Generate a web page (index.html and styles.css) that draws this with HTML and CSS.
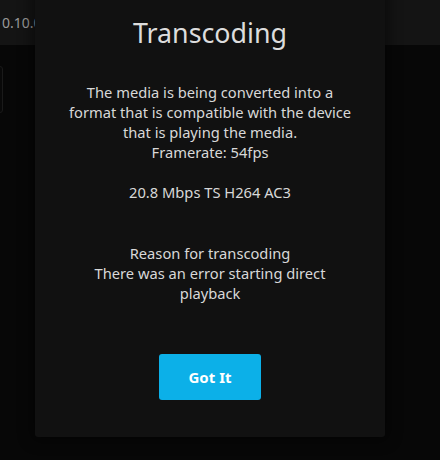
FILE: index.html
```html
<!DOCTYPE html>
<html>
<head>
<meta charset="utf-8">
<link rel="stylesheet" href="styles.css">
</head>
<body>
<header class="topbar">
  <span class="server">10.10.0.12</span>
</header>
<main class="page">
  <div class="card-edge"></div>
</main>
<div class="dialog">
  <h1 class="title">Transcoding</h1>
  <div class="body">
    <p>The media is being converted into a format that is compatible with the device that is playing the media.<br>Framerate: 54fps</p>
    <p class="stats">20.8 Mbps TS H264 AC3</p>
    <p class="reason">Reason for transcoding<br>There was an error starting direct playback</p>
  </div>
  <div class="actions">
    <button class="btn">Got It</button>
  </div>
</div>
</body>
</html>
```

FILE: styles.css
```css
html, body {
  margin: 0;
  padding: 0;
  background: #070707;
  height: 100%;
  overflow: hidden;
  font-family: "Noto Sans", "Open Sans", sans-serif;
}
.topbar {
  height: 45px;
  background: #141414;
  display: flex;
  align-items: center;
  overflow: hidden;
}
.server {
  color: #9a9a9a;
  font-size: 14px;
  margin-left: -6px;
  white-space: nowrap;
}
.page {
  padding-top: 21px;
}
.card-edge {
  width: 20px;
  height: 45px;
  margin-left: -19px;
  border: 1px solid #1a1a1a;
  border-radius: 3px;
  background: #090909;
}
.dialog {
  position: absolute;
  left: 35px;
  top: -20px;
  width: 350px;
  height: 457px;
  box-sizing: border-box;
  background: #111111;
  border-radius: 3px;
  box-shadow: 0 0 14px 4px rgba(0,0,0,0.45);
  display: flex;
  flex-direction: column;
  align-items: center;
  text-align: center;
  color: #d8d8d8;
}
.title {
  margin: 33px 0 0;
  font-size: 26.8px;
  font-weight: 400;
  line-height: 40px;
  color: #dddddd;
}
.body {
  margin-top: 29px;
  width: 290px;
  font-size: 14.7px;
  line-height: 20px;
}
.body p {
  margin: 0;
}
.stats {
  margin-top: 20px !important;
}
.reason {
  margin-top: 41px !important;
}
.actions {
  margin-top: 51px;
}
.btn {
  width: 102px;
  height: 46px;
  border: 0;
  border-radius: 3px;
  background: #0cb0e8;
  color: #ffffff;
  font-family: "Noto Sans", "Open Sans", sans-serif;
  font-weight: 700;
  font-size: 15px;
}
```
